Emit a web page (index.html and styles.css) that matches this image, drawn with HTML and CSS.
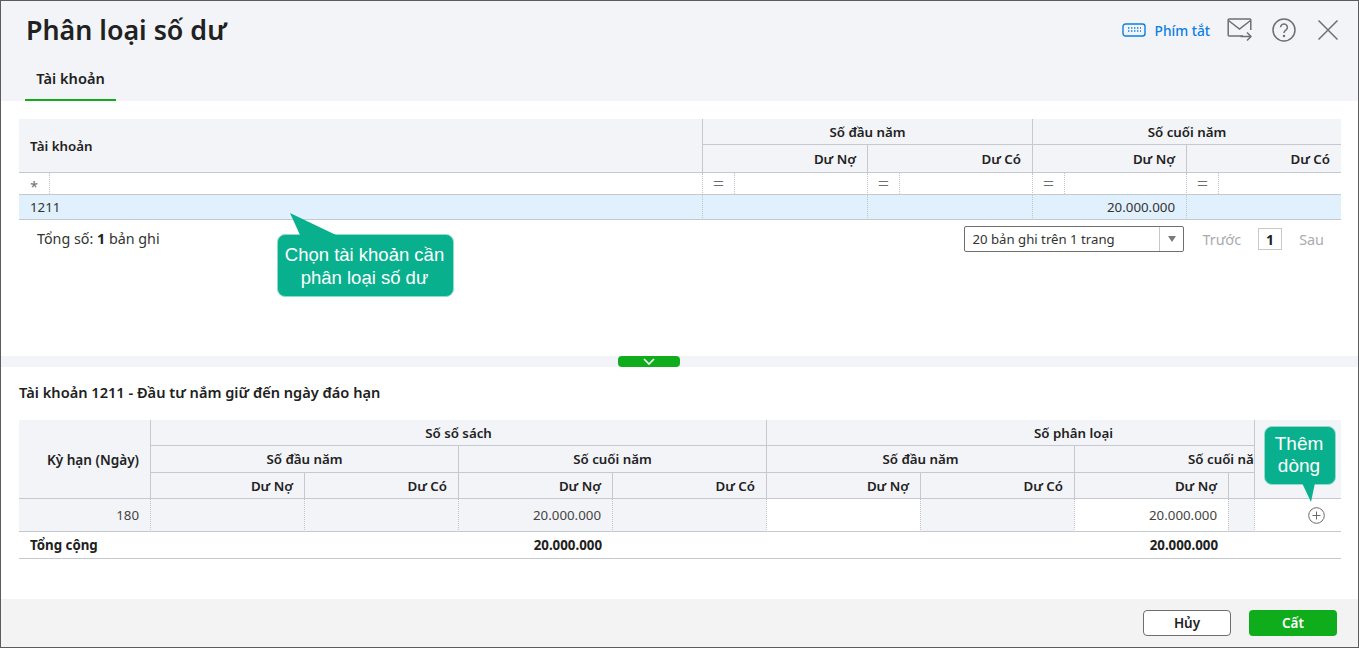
FILE: index.html
```html
<!DOCTYPE html>
<html lang="vi">
<head>
<meta charset="utf-8">
<title>Phân loại số dư</title>
<link rel="stylesheet" href="styles.css">
</head>
<body>
<div class="window">
  <header class="head">
    <div class="head-top">
      <h1 class="title">Phân loại số dư</h1>
      <div class="tools">
        <a class="shortcut">
          <svg class="kbd" width="24" height="14" viewBox="0 0 24 14" fill="none"><rect x="1" y="1" width="22" height="12" rx="2.5" stroke="#0b7fe3" stroke-width="1.4"/><path d="M6 5h1.4M9 5h1.4M12 5h1.4M15 5h1.4M18 5h1M6 8h1.4M9 8h1.4M12 8h1.4M15 8h1.4M18 8h1" stroke="#0b7fe3" stroke-width="1.3"/></svg>
          <span>Phím tắt</span>
        </a>
        <svg class="ic-mail" width="25" height="24" viewBox="0 0 25 24" fill="none" stroke="#6f6f6f" stroke-width="1.5"><path d="M16 18H2.2a1 1 0 0 1-1-1V2a1 1 0 0 1 1-1h20.6a1 1 0 0 1 1 1v10"/><path d="M1.5 2.5 12.5 11 23.5 2.5"/><path d="M13.5 18.5h10.5M20 14.5l4 4-4 4"/></svg>
        <svg class="ic-help" width="24" height="24" viewBox="0 0 24 24" fill="none" stroke="#6f6f6f" stroke-width="1.5"><circle cx="12" cy="12" r="11"/><path d="M8.6 9.3a3.4 3.4 0 1 1 5.3 2.9c-1.2.8-1.9 1.4-1.9 2.8"/><circle cx="12" cy="18" r=".5" fill="#6f6f6f"/></svg>
        <svg class="ic-close" width="20" height="20" viewBox="0 0 20 20" fill="none" stroke="#6f6f6f" stroke-width="1.5"><path d="M.5.5 19.5 19.5M19.5.5.5 19.5"/></svg>
      </div>
    </div>
    <nav class="tabs"><span class="tab">Tài khoản</span></nav>
  </header>

  <section class="upper">
    <table class="grid grid-a">
      <colgroup>
        <col class="a1"><col class="a2"><col class="a2"><col class="a3"><col class="a4">
      </colgroup>
      <thead>
        <tr class="h25">
          <th rowspan="2" class="left nob-l">Tài khoản</th>
          <th colspan="2" class="center">Số đầu năm</th>
          <th colspan="2" class="center">Số cuối năm</th>
        </tr>
        <tr class="h28">
          <th class="right">Dư Nợ</th>
          <th class="right">Dư Có</th>
          <th class="right">Dư Nợ</th>
          <th class="right">Dư Có</th>
        </tr>
      </thead>
      <tbody>
        <tr class="filter">
          <td class="dotted-none"><div class="fcell"><span class="op op-star">*</span><span class="fbox"></span></div></td>
          <td><div class="fcell"><span class="op">=</span><span class="fbox"></span></div></td>
          <td><div class="fcell"><span class="op">=</span><span class="fbox"></span></div></td>
          <td><div class="fcell"><span class="op">=</span><span class="fbox"></span></div></td>
          <td><div class="fcell"><span class="op">=</span><span class="fbox"></span></div></td>
        </tr>
        <tr class="selected">
          <td class="left dotted-none">1211</td>
          <td></td>
          <td></td>
          <td class="right">20.000.000</td>
          <td></td>
        </tr>
      </tbody>
    </table>
    <div class="pager">
      <div class="total">Tổng số: <b>1</b> bản ghi</div>
      <div class="pager-right">
        <div class="select"><span class="select-text">20 bản ghi trên 1 trang</span><span class="select-btn"><i class="caret"></i></span></div>
        <span class="page-link">Trước</span>
        <span class="page-num">1</span>
        <span class="page-link">Sau</span>
      </div>
    </div>
  </section>

  <div class="splitter"><span class="pill"><svg width="12" height="7" viewBox="0 0 12 7" fill="none" stroke="#fff" stroke-width="1.6"><path d="M1 1l5 5 5-5"/></svg></span></div>

  <section class="lower">
    <h2 class="sub">Tài khoản 1211 - Đầu tư nắm giữ đến ngày đáo hạn</h2>
    <table class="grid grid-b">
      <colgroup>
        <col class="b1"><col class="b2"><col class="b2"><col class="b2"><col class="b2"><col class="b2"><col class="b2"><col class="b2"><col class="b3"><col class="b4">
      </colgroup>
      <thead>
        <tr class="h26">
          <th rowspan="3" class="right nob-l term">Kỳ hạn (Ngày)</th>
          <th colspan="4" class="center">Số sổ sách</th>
          <th colspan="4" class="clip clip-group">Số phân loại</th>
          <th rowspan="3"></th>
        </tr>
        <tr class="h27">
          <th colspan="2" class="center">Số đầu năm</th>
          <th colspan="2" class="center">Số cuối năm</th>
          <th colspan="2" class="center">Số đầu năm</th>
          <th colspan="2" class="clip clip-sub">Số cuối năm</th>
        </tr>
        <tr class="h26">
          <th class="right">Dư Nợ</th>
          <th class="right">Dư Có</th>
          <th class="right">Dư Nợ</th>
          <th class="right">Dư Có</th>
          <th class="right">Dư Nợ</th>
          <th class="right">Dư Có</th>
          <th class="right">Dư Nợ</th>
          <th></th>
        </tr>
      </thead>
      <tbody>
        <tr class="data">
          <td class="right grey dotted-none">180</td>
          <td class="grey"></td>
          <td class="grey"></td>
          <td class="right grey">20.000.000</td>
          <td class="grey"></td>
          <td></td>
          <td class="grey"></td>
          <td class="right">20.000.000</td>
          <td class="grey"></td>
          <td class="action"><svg width="17" height="17" viewBox="0 0 17 17" fill="none" stroke="#6a6a6a"><circle cx="8.5" cy="8.5" r="7.8"/><path d="M8.5 4.5v8M4.5 8.5h8"/></svg></td>
        </tr>
        <tr class="sum">
          <td class="left">Tổng cộng</td>
          <td></td>
          <td></td>
          <td class="right">20.000.000</td>
          <td></td>
          <td></td>
          <td></td>
          <td class="right">20.000.000</td>
          <td></td>
          <td></td>
        </tr>
      </tbody>
    </table>
  </section>

  <footer class="foot">
    <button class="btn btn-ghost">Hủy</button>
    <button class="btn btn-primary">Cất</button>
  </footer>

  <div class="callout callout-a">
    <svg class="tail tail-a" width="48" height="24" viewBox="0 0 48 24"><path d="M0 0 46 22H10Z" fill="#09b08e"/></svg>
    Chọn tài khoản cần<br>phân loại số dư
  </div>
  <div class="callout callout-b">
    <svg class="tail tail-b" width="14" height="20" viewBox="0 0 14 20"><path d="M0 0H13L9 19Z" fill="#09b08e"/></svg>
    Thêm<br>dòng
  </div>
</div>
</body>
</html>
```

FILE: styles.css
```css
* { box-sizing: border-box; }
html, body { margin: 0; height: 100%; background: #fff; }
body { font-family: "Noto Sans", sans-serif; font-size: 13px; color: #212121; overflow: hidden; }

.window {
  position: relative;
  width: 1359px;
  height: 648px;
  display: flex;
  flex-direction: column;
  border: 1px solid #5c5c5c;
  background: #fff;
}

/* header */
.head { height: 100px; background: #f3f4f8; flex: none; display: flex; flex-direction: column; }
.head-top { height: 64px; display: flex; align-items: center; justify-content: space-between; padding: 0 20px 6px 25px; }
.title { margin: 0; font-size: 26.8px; font-weight: 600; line-height: 36px; color: #212121; }
.tools { display: flex; align-items: center; }
.shortcut { display: flex; align-items: center; color: #0b7fe3; font-size: 13.7px; font-weight: 500; margin-right: 17px; }
.kbd { margin-right: 9px; }
.ic-mail { margin-right: 20px; }
.ic-help { margin-right: 22px; }

.tabs { flex: 1; padding-left: 24px; display: flex; }
.tab { width: 91px; height: 36px; display: flex; justify-content: center; align-items: center; padding-bottom: 9px; font-size: 14.6px; font-weight: 600; border-bottom: 2px solid #0fac1c; }

/* tables */
.grid { border-collapse: separate; border-spacing: 0; table-layout: fixed; width: 1322px; }
.grid th, .grid td { padding: 0 11px; white-space: nowrap; overflow: hidden; font-size: 13.3px; }
.grid th { background: #f3f4f8; font-weight: 600; border-left: 1px solid #c6c8d0; border-bottom: 1px solid #c6c8d0; color: #212121; }
.grid td { border-left: 1px dotted #c2c4cc; border-bottom: 1px solid #c6c8d0; }
.grid .nob-l, .grid .dotted-none { border-left: 0; }
.grid .term { font-size: 13.6px; }
.left { text-align: left; }
.right { text-align: right; }
.center { text-align: center; }

.a1 { width: 683px; }
.a2 { width: 165px; }
.a3 { width: 154px; }
.a4 { width: 155px; }
.b1 { width: 131px; }
.b2 { width: 154px; }
.b3 { width: 26px; }
.b4 { width: 87px; }

.h25 { height: 26px; }
.h26 { height: 26px; }
.h27 { height: 27px; }
.h28 { height: 28px; }

.upper { flex: none; height: 255px; padding: 18px 0 0 18px; }
.grid-a .filter { height: 22px; }
.grid-a .filter td { padding: 0; overflow: visible; }
.fcell { display: flex; height: 21px; align-items: center; }
.op { width: 32px; flex: none; text-align: center; color: #6d6d6d; font-size: 20px; font-weight: 300; line-height: 21px; height: 21px; border-right: 1px dotted #c2c4cc; }
.op-star { font-size: 14px; font-weight: 400; width: 31px; padding-top: 3px; }
.fbox { flex: 1; }
.selected { height: 25px; }
.selected td { background: #e1f0fd; color: #333; }

.pager { width: 1322px; height: 38px; display: flex; align-items: center; justify-content: space-between; padding: 0 17px 2px 18px; }
.total { color: #333; font-size: 14.3px; }
.total b { font-weight: 700; color: #212121; }
.pager-right { display: flex; align-items: center; margin-bottom: -2px; }
.select { width: 220px; height: 26px; border: 1px solid #6f6f6f; border-radius: 2px; display: flex; align-items: center; background: #fff; }
.select-text { flex: 1; padding-left: 7px; color: #333; font-size: 13.2px; }
.select-btn { width: 24px; height: 24px; border-left: 1px solid #c6c8d0; display: flex; align-items: center; justify-content: center; }
.caret { width: 0; height: 0; border-left: 4px solid transparent; border-right: 4px solid transparent; border-top: 6px solid #7a7a7a; }
.page-link { color: #a9abb0; margin-left: 18px; font-size: 14.4px; }
.page-num { width: 24px; height: 22px; border: 1px solid #c6c8d0; display: flex; align-items: center; justify-content: center; font-weight: 700; font-size: 14px; margin-left: 17px; }
.page-num + .page-link { margin-left: 17px; }

/* splitter */
.splitter { height: 11px; flex: none; background: #f3f4f8; display: flex; justify-content: center; padding-right: 61px; }
.pill { width: 62px; height: 11px; background: #0fac1c; border-radius: 4px; display: flex; align-items: center; justify-content: center; }

/* lower */
.lower { flex: 1; padding: 0 0 0 18px; }
.sub { margin: 0; height: 53px; padding-top: 14px; font-size: 14.6px; font-weight: 600; line-height: 22px; color: #212121; }
.grid .clip { text-align: left; padding-right: 0; }
.grid .clip-group { padding-left: 267px; }
.grid .clip-sub { padding-left: 113px; }
.data { height: 33px; }
.data td { color: #444; }
.data td.grey { background: #f3f4f8; }
.data .action { padding: 0 0 0 53px; }
.data .action svg { display: block; }
.sum { height: 27px; }
.sum td { border-left: 0; font-weight: 700; color: #212121; }
.sum .right { padding-right: 10px; }

/* footer */
.foot { height: 48px; flex: none; background: #f3f3f4; display: flex; justify-content: flex-end; align-items: flex-start; gap: 18px; padding: 11px 21px 0 0; }
.btn { width: 88px; height: 26px; border-radius: 4px; font: 600 13.5px "Noto Sans", sans-serif; padding: 0; }
.btn-ghost { background: #fff; border: 1px solid #6f6f6f; color: #212121; }
.btn-primary { background: #0fac1c; border: 0; color: #fff; }

/* callouts */
.callout { position: absolute; background: #09b08e; color: #fff; font-family: "Liberation Sans", Arial, sans-serif; text-align: center; border-radius: 8px; border: 1px solid #8fdccb; }
.tail { position: absolute; }
.callout-a { left: 276px; top: 233px; width: 177px; height: 63px; font-size: 18.5px; line-height: 23px; padding: 8px 2px 0 0; }
.tail-a { left: 12px; top: -22px; }
.callout-b { left: 1263px; top: 425px; width: 72px; height: 59px; font-size: 19px; line-height: 22px; padding: 6px 2px 0 0; }
.tail-b { left: 37px; top: 56px; }
```
